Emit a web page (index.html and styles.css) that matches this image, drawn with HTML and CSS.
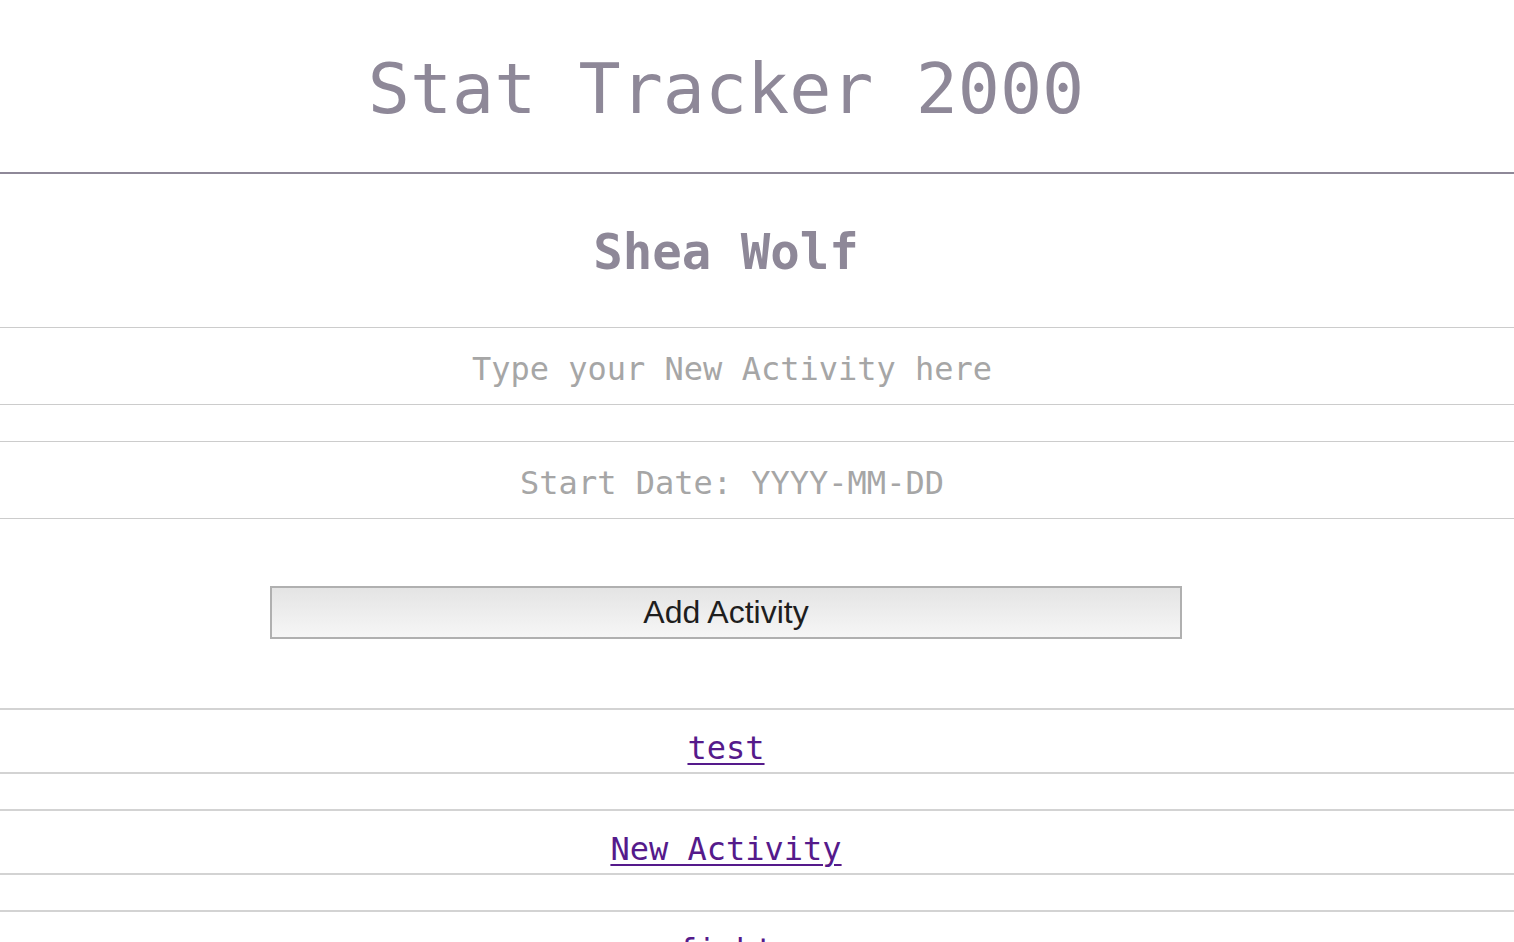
FILE: index.html
```html
<!DOCTYPE html>
<html lang="en">
<head>
<meta charset="utf-8">
<title>Stat Tracker 2000</title>
<link rel="stylesheet" href="styles.css">
</head>
<body>
<header class="site-header">
  <h1 class="title">Stat Tracker 2000</h1>
</header>
<main class="main">
  <h2 class="user-name">Shea Wolf</h2>
  <form class="activity-form">
    <input class="field" type="text" placeholder="Type your New Activity here">
    <input class="field field-date" type="text" placeholder="Start Date: YYYY-MM-DD">
    <div class="button-row">
      <button class="add-button" type="button">Add Activity</button>
    </div>
  </form>
  <ul class="activity-list">
    <li class="activity-item"><a class="activity-link" href="#test">test</a></li>
    <li class="activity-item"><a class="activity-link" href="#new">New Activity</a></li>
    <li class="activity-item"><a class="activity-link" href="#fight">fight</a></li>
  </ul>
</main>
</body>
</html>
```
FILE: styles.css
```css
html, body {
  margin: 0;
  padding: 0;
  background: #ffffff;
}

body {
  font-family: "DejaVu Sans Mono", "Liberation Mono", monospace;
  overflow: hidden;
  height: 942px;
}

.site-header {
  box-sizing: border-box;
  height: 174px;
  padding: 39px 62px 0 0;
  border-bottom: 2px solid #8e8898;
}

.title {
  margin: 0;
  text-align: center;
  font-size: 70px;
  line-height: 100px;
  font-weight: normal;
  letter-spacing: 0;
  color: #8e8898;
}

.main {
  display: flex;
  flex-direction: column;
}

.user-name {
  margin: 49px 0 44px;
  padding-right: 62px;
  text-align: center;
  font-size: 49px;
  line-height: 60px;
  font-weight: bold;
  color: #8e8898;
}

.activity-form {
  display: flex;
  flex-direction: column;
  margin: 0;
}

.field {
  display: block;
  box-sizing: border-box;
  width: 100%;
  height: 78px;
  margin: 0;
  padding: 6px 50px 0 0;
  border: none;
  border-top: 1px solid #cccccc;
  border-bottom: 1px solid #cccccc;
  outline: none;
  text-align: center;
  font-family: "DejaVu Sans Mono", "Liberation Mono", monospace;
  font-size: 32px;
  color: #555555;
  background: #ffffff;
}

.field::placeholder {
  color: #a6a6a6;
  opacity: 1;
}

.field-date {
  margin-top: 36px;
}

.button-row {
  display: flex;
  padding: 67px 0 69px 270px;
}

.add-button {
  box-sizing: border-box;
  width: 912px;
  height: 53px;
  margin: 0;
  padding: 0;
  border: 2px solid #b0b0b0;
  background: linear-gradient(to bottom, #e4e4e4, #f6f6f6);
  font-family: "Liberation Sans", Arial, sans-serif;
  font-size: 32px;
  line-height: 47px;
  color: #1e1e1e;
  cursor: pointer;
}

.activity-list {
  list-style: none;
  margin: 0;
  padding: 0;
  display: flex;
  flex-direction: column;
  gap: 35px;
}

.activity-item {
  box-sizing: border-box;
  height: 66px;
  padding: 18px 62px 0 0;
  border-top: 2px solid #d3d3d3;
  border-bottom: 2px solid #d3d3d3;
  text-align: center;
  font-size: 32px;
  line-height: 40px;
}

.activity-link {
  color: #551a8b;
  text-decoration: underline;
  text-decoration-thickness: 2px;
  text-underline-offset: 4px;
}
```
